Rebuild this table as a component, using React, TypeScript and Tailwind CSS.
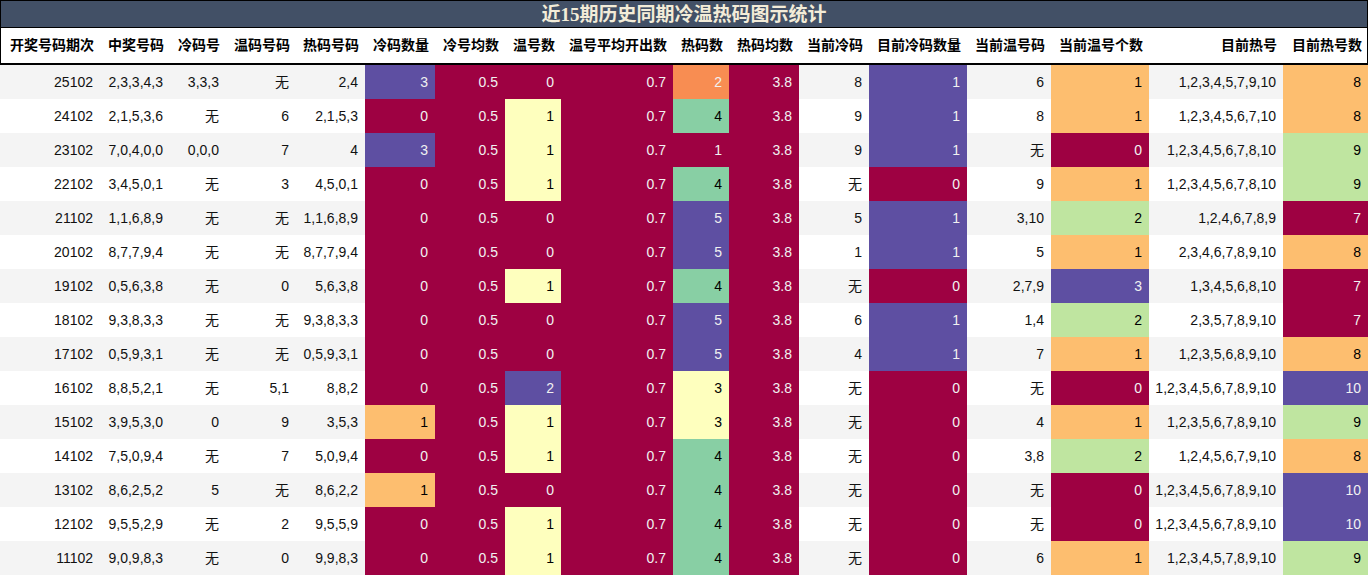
import React from "react"

const M = "bg-[#9e0142] text-[#f1f1f1]"
const P = "bg-[#5e4fa2] text-[#f1f1f1]"
const O = "bg-[#f88d52] text-[#f1f1f1]"
const LO = "bg-[#fdbe6f] text-black"
const Y = "bg-[#feffbe] text-black"
const G = "bg-[#88cfa4] text-black"
const LG = "bg-[#bfe5a0] text-black"

const headers = [
  "开奖号码期次", "中奖号码", "冷码号", "温码号码", "热码号码", "冷码数量", "冷号均数", "温号数",
  "温号平均开出数", "热码数", "热码均数", "当前冷码", "目前冷码数量", "当前温号码", "当前温号个数", "目前热号", "目前热号数",
]

// per-column colour scale (Spectral style gradient), null = plain row background
const scales: (Record<string, string> | null)[] = [
  null, null, null, null, null,
  { "0": M, "1": LO, "3": P },
  { "0.5": M },
  { "0": M, "1": Y, "2": P },
  { "0.7": M },
  { "1": M, "2": O, "3": Y, "4": G, "5": P },
  { "3.8": M },
  null,
  { "0": M, "1": P },
  null,
  { "0": M, "1": LO, "2": LG, "3": P },
  null,
  { "7": M, "8": LO, "9": LG, "10": P },
]

const rows: string[][] = [
  ["25102", "2,3,3,4,3", "3,3,3", "无", "2,4", "3", "0.5", "0", "0.7", "2", "3.8", "8", "1", "6", "1", "1,2,3,4,5,7,9,10", "8"],
  ["24102", "2,1,5,3,6", "无", "6", "2,1,5,3", "0", "0.5", "1", "0.7", "4", "3.8", "9", "1", "8", "1", "1,2,3,4,5,6,7,10", "8"],
  ["23102", "7,0,4,0,0", "0,0,0", "7", "4", "3", "0.5", "1", "0.7", "1", "3.8", "9", "1", "无", "0", "1,2,3,4,5,6,7,8,10", "9"],
  ["22102", "3,4,5,0,1", "无", "3", "4,5,0,1", "0", "0.5", "1", "0.7", "4", "3.8", "无", "0", "9", "1", "1,2,3,4,5,6,7,8,10", "9"],
  ["21102", "1,1,6,8,9", "无", "无", "1,1,6,8,9", "0", "0.5", "0", "0.7", "5", "3.8", "5", "1", "3,10", "2", "1,2,4,6,7,8,9", "7"],
  ["20102", "8,7,7,9,4", "无", "无", "8,7,7,9,4", "0", "0.5", "0", "0.7", "5", "3.8", "1", "1", "5", "1", "2,3,4,6,7,8,9,10", "8"],
  ["19102", "0,5,6,3,8", "无", "0", "5,6,3,8", "0", "0.5", "1", "0.7", "4", "3.8", "无", "0", "2,7,9", "3", "1,3,4,5,6,8,10", "7"],
  ["18102", "9,3,8,3,3", "无", "无", "9,3,8,3,3", "0", "0.5", "0", "0.7", "5", "3.8", "6", "1", "1,4", "2", "2,3,5,7,8,9,10", "7"],
  ["17102", "0,5,9,3,1", "无", "无", "0,5,9,3,1", "0", "0.5", "0", "0.7", "5", "3.8", "4", "1", "7", "1", "1,2,3,5,6,8,9,10", "8"],
  ["16102", "8,8,5,2,1", "无", "5,1", "8,8,2", "0", "0.5", "2", "0.7", "3", "3.8", "无", "0", "无", "0", "1,2,3,4,5,6,7,8,9,10", "10"],
  ["15102", "3,9,5,3,0", "0", "9", "3,5,3", "1", "0.5", "1", "0.7", "3", "3.8", "无", "0", "4", "1", "1,2,3,5,6,7,8,9,10", "9"],
  ["14102", "7,5,0,9,4", "无", "7", "5,0,9,4", "0", "0.5", "1", "0.7", "4", "3.8", "无", "0", "3,8", "2", "1,2,4,5,6,7,9,10", "8"],
  ["13102", "8,6,2,5,2", "5", "无", "8,6,2,2", "1", "0.5", "0", "0.7", "4", "3.8", "无", "0", "无", "0", "1,2,3,4,5,6,7,8,9,10", "10"],
  ["12102", "9,5,5,2,9", "无", "2", "9,5,5,9", "0", "0.5", "1", "0.7", "4", "3.8", "无", "0", "无", "0", "1,2,3,4,5,6,7,8,9,10", "10"],
  ["11102", "9,0,9,8,3", "无", "0", "9,9,8,3", "0", "0.5", "1", "0.7", "4", "3.8", "无", "0", "6", "1", "1,2,3,4,5,7,8,9,10", "9"],
]

const cols = "grid grid-cols-[100px_70px_56px_70px_69px_70px_70px_56px_112px_56px_70px_70px_98px_84px_98px_134px_85px]"

export default function App() {
  return (
    <div className="w-[1368px] bg-white font-['Liberation_Sans','Noto_Sans_CJK_SC',sans-serif] text-[14px]">
      <div className="h-[28px] border border-black bg-[#425066] flex items-center justify-center">
        <h1 className="font-['Liberation_Serif','Noto_Sans_CJK_SC',serif] font-bold text-[19px] text-[#f3ecd8] leading-none">
          近15期历史同期冷温热码图示统计
        </h1>
      </div>
      <div className={`${cols} h-[37px] border-x border-b-[2px] border-black`}>
        {headers.map((h) => (
          <div key={h} className="px-[7px] flex items-center justify-end font-bold text-black whitespace-nowrap">
            {h}
          </div>
        ))}
      </div>
      {rows.map((r, i) => (
        <div key={r[0]} className={`${cols} h-[34px] ${i % 2 === 0 ? "bg-[#f4f4f4]" : "bg-white"}`}>
          {r.map((v, j) => {
            const sc = scales[j]
            const color = sc ? sc[v] : "text-[#111]"
            return (
              <div key={j} className={`px-[7px] flex items-center justify-end whitespace-nowrap ${color}`}>
                {v}
              </div>
            )
          })}
        </div>
      ))}
    </div>
  )
}
